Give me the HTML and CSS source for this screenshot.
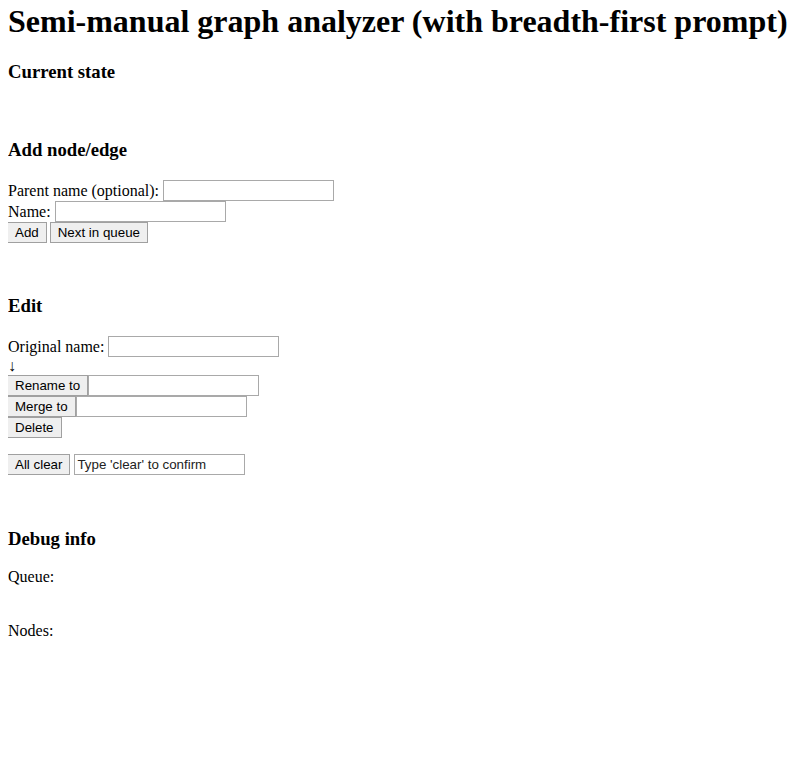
FILE: index.html
```html
<!DOCTYPE html>
<html>
<head>
<meta charset="utf-8">
<title>Semi-manual graph analyzer</title>
<link rel="stylesheet" href="styles.css">
</head>
<body class="page">
<h1 class="title">Semi-manual graph analyzer (with breadth-first prompt)</h1>
<h3 class="section-title">Current state</h3>
<div class="state"></div>
<h3 class="section-title">Add node/edge</h3>
<div class="form">
  <div class="row">Parent name (optional): <input class="field" type="text"></div>
  <div class="row">Name: <input class="field" type="text"></div>
  <div class="row"><button class="btn">Add</button> <button class="btn">Next in queue</button></div>
</div>
<h3 class="section-title edit-title">Edit</h3>
<div class="form">
  <div class="row">Original name: <input class="field" type="text"></div>
  <div class="row arrow">↓</div>
  <div class="row"><button class="btn">Rename to</button><input class="field" type="text"></div>
  <div class="row"><button class="btn">Merge to</button><input class="field" type="text"></div>
  <div class="row"><button class="btn">Delete</button></div>
  <div class="row clear-row"><button class="btn">All clear</button> <input class="field confirm" type="text" placeholder="Type 'clear' to confirm"></div>
</div>
<h3 class="section-title debug-title">Debug info</h3>
<p class="debug">Queue:</p>
<p class="debug nodes">Nodes:</p>
</body>
</html>
```
FILE: styles.css
```css
html { background: #fff; }
.page {
  margin: 8px;
  font-family: "Liberation Serif", "Times New Roman", serif;
  font-size: 16px;
  color: #000;
}
.title {
  font-size: 32px;
  font-weight: bold;
  line-height: 27px;
  margin: 0 0 26px 0;
}
.section-title {
  font-size: 18.72px;
  font-weight: bold;
  margin: 18px 0;
}
.state { height: 20px; }
.form { padding-top: 1px; }
.row { line-height: 22px; height: 21px; }
.field {
  font-family: "Liberation Sans", Arial, sans-serif;
  font-size: 13.33px;
  width: 165px;
  height: 17px;
  padding: 1px 2px;
  border: 1px solid #a9a9a9;
  margin: 0;
  vertical-align: top;
  box-sizing: content-box;
}
.confirm::placeholder { color: #222; }
.btn {
  font-family: "Liberation Sans", Arial, sans-serif;
  font-size: 13.33px;
  line-height: 15px;
  height: 21px;
  background: #efefef;
  border: 1px solid #a0a0a0;
  border-radius: 0;
  padding: 2px 7px;
  margin: 0 0 0 -1px;
  color: #000;
  vertical-align: top;
}
.arrow { height: 18px; line-height: 18px; }
.clear-row { margin-top: 16px; }
.edit-title { margin-top: 52px; }
.debug-title { margin-top: 53px; }
.debug { margin: 16px 0; }
.nodes { margin-top: 36px; }
```
